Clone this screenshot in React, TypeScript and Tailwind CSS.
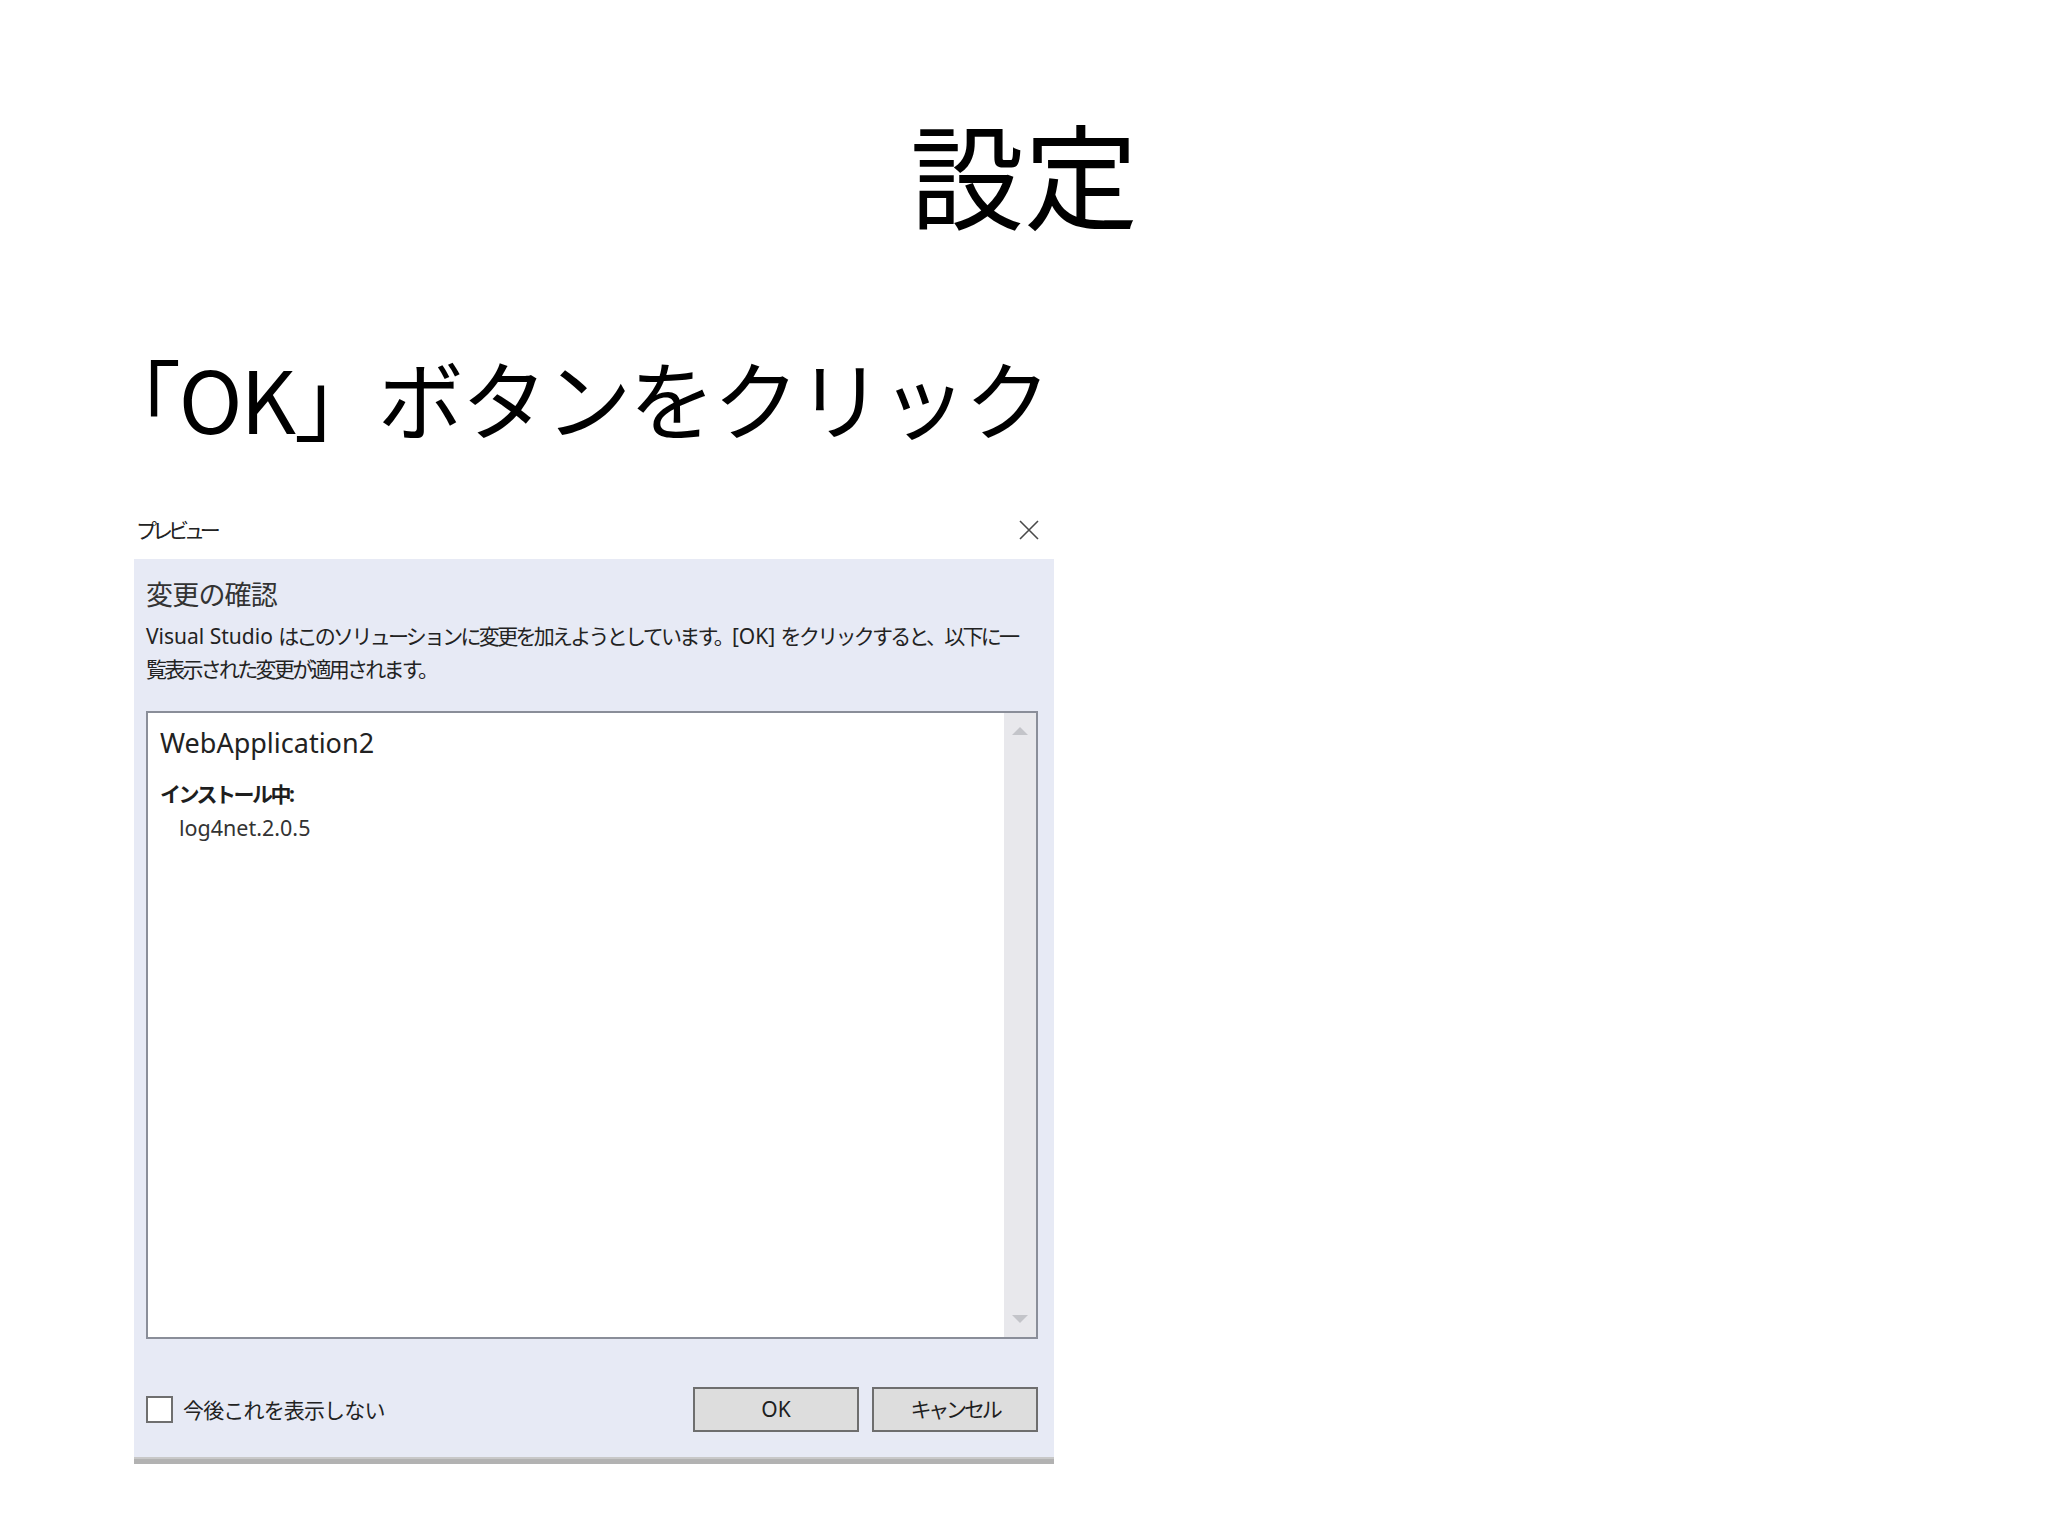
import React from 'react';

const CloseIcon = () => (
  <svg width="20" height="20" viewBox="0 0 20 20" fill="none">
    <path d="M1 1L19 19M19 1L1 19" stroke="#4a4a4a" strokeWidth="1.6" />
  </svg>
);

const ListBox = () => (
  <div className="mt-[25px] flex h-[628px] w-[892px] border-2 border-[#8a8e99] bg-white">
    <div className="flex-1 pl-[12px] pt-[12px]">
      <div className="text-[27px] leading-[36px] text-[#222]">WebApplication2</div>
      <div className="mt-[19px] text-[21px] font-bold leading-[28px] tracking-[-0.12em] text-[#1e1e1e]">
        インストール中:
      </div>
      <div className="mt-[6px] pl-[19px] text-[21.5px] leading-[28px] text-[#333]">log4net.2.0.5</div>
    </div>
    {/* scrollbar */}
    <div className="flex w-[32px] flex-col items-center justify-between bg-[#e8e8ec] pb-[14px] pt-[14px]">
      <svg width="16" height="8" viewBox="0 0 16 8">
        <path d="M0 8L8 0L16 8Z" fill="#c3c4c9" />
      </svg>
      <svg width="16" height="8" viewBox="0 0 16 8">
        <path d="M0 0L16 0L8 8Z" fill="#c3c4c9" />
      </svg>
    </div>
  </div>
);

const Dialog = () => (
  <div className="ml-[134px] mt-[76px] w-[920px]">
    <div className="flex h-[28px] items-center justify-between pl-[2px] pr-[15px]">
      <span className="text-[21px] leading-[28px] tracking-[-0.24em] text-[#222]">プレビュー</span>
      <CloseIcon />
    </div>
    <div className="mt-[15px] bg-[#e7eaf5] px-[12px] pb-[25px] pt-[18px]">
      <div className="text-[27px] leading-[36px] tracking-[-0.03em] text-[#333]">変更の確認</div>
      <p className="mt-[7px] whitespace-nowrap text-[21px] leading-[33px] tracking-[-0.13em] text-[#222]">
        <span className="tracking-normal">Visual Studio </span>
        はこのソリューションに変更を加えようとしています。
        <span className="tracking-normal">[OK] </span>
        をクリックすると、以下に一
        <br />
        覧表示された変更が適用されます。
      </p>
      <ListBox />
      <div className="mt-[48px] flex items-center justify-between pr-[4px]">
        <label className="flex items-center gap-[10px]">
          <span className="h-[27px] w-[27px] border-2 border-[#6f6f6f] bg-white" />
          <span className="text-[21px] leading-[28px] tracking-[-0.04em] text-[#222]">今後これを表示しない</span>
        </label>
        <div className="flex gap-[13px]">
          <button className="h-[45px] w-[166px] border-2 border-[#6e6e6e] bg-[#dddddd] text-[21px] text-[#1e1e1e]">
            OK
          </button>
          <button className="h-[45px] w-[166px] border-2 border-[#6e6e6e] bg-[#dddddd] text-[21px] tracking-[-0.15em] text-[#1e1e1e]">
            キャンセル
          </button>
        </div>
      </div>
    </div>
    <div className="h-[7px] border-t-2 border-[#c8c8c8] bg-[#b2b2b2]" />
  </div>
);

export default function App() {
  return (
    <div className="min-h-[1536px] w-[2048px] bg-white font-['Noto_Sans','Noto_Sans_CJK_JP',sans-serif]">
      <h1 className="pt-[115px] text-center font-['Noto_Sans_CJK_JP',sans-serif] text-[114px] leading-none text-black">
        設定
      </h1>
      <h2 className="mt-[125px] pl-[95px] font-['Noto_Sans_CJK_JP',sans-serif] text-[86px] leading-none tracking-[-0.025em] text-black">
        「OK」ボタンをクリック
      </h2>
      <Dialog />
    </div>
  );
}
